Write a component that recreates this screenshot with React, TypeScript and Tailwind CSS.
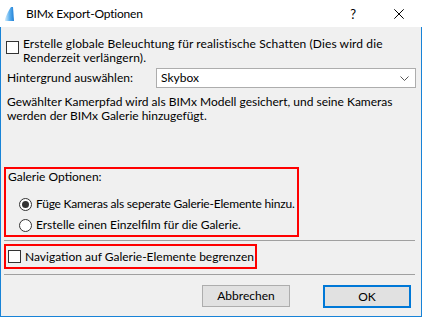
import React from "react";

const font = { fontFamily: 'Lato, "Noto Sans", sans-serif' };

function Checkbox() {
  return <div className="w-[13px] h-[13px] border border-[#333333] bg-white shrink-0" />;
}

function Radio({ checked }: { checked?: boolean }) {
  return (
    <div className="w-[13px] h-[13px] rounded-full border border-[#333333] bg-white shrink-0 flex items-center justify-center">
      {checked && <div className="w-[7px] h-[7px] rounded-full bg-[#333333]" />}
    </div>
  );
}

export default function App() {
  return (
    <div
      className="w-[422px] h-[317px] flex flex-col text-[12px] leading-[14px] text-black overflow-hidden"
      style={font}
    >
      <div className="h-[27px] bg-white flex items-center shrink-0">
        <svg className="ml-[5px]" width="9" height="14" viewBox="0 0 9 14">
          <defs>
            <linearGradient id="g" x1="0" y1="0" x2="1" y2="0">
              <stop offset="0" stopColor="#d6eefc" />
              <stop offset="0.5" stopColor="#5db0ee" />
              <stop offset="1" stopColor="#1f7fd6" />
            </linearGradient>
          </defs>
          <path d="M0 14 L0 12 Q3 4 6 0 L8 0 L9 14 Z" fill="url(#g)" />
        </svg>
        <span className="ml-[12px] text-[12px] tracking-[-0.2px] whitespace-nowrap">BIMx Export-Optionen</span>
        <span className="ml-auto text-[13px]">?</span>
        <svg className="ml-[38px] mr-[18px]" width="10" height="10" viewBox="0 0 10 10">
          <path d="M0.3 0.3 L9.7 9.7 M9.7 0.3 L0.3 9.7" stroke="#000" strokeWidth="1" />
        </svg>
      </div>
      <div className="flex-1 flex flex-col bg-[#f0f0f0] border-x border-b border-[#1883d7] px-[5px] pt-[10px]">
        <div className="flex items-start">
          <div className="mt-[4px]"><Checkbox /></div>
          <div className="ml-[4px] whitespace-nowrap tracking-[0.1px]">
            Erstelle globale Beleuchtung für realistische Schatten (Dies wird die
            <br />
            Renderzeit verlängern).
          </div>
        </div>
        <div className="flex items-center mt-[3px]">
          <span className="w-[150px] pl-[1px] whitespace-nowrap">Hintergrund auswählen:</span>
          <div className="w-[260px] h-[20px] border border-[#adadad] bg-white flex items-center pl-[4px] pr-[6px]">
            <span>Skybox</span>
            <svg className="ml-auto" width="9" height="5" viewBox="0 0 9 5">
              <path d="M0.5 0.5 L4.5 4.5 L8.5 0.5" stroke="#555" fill="none" strokeWidth="1" />
            </svg>
          </div>
        </div>
        <div className="mt-[7px] pl-[1px] whitespace-nowrap">
          Gewählter Kamerpfad wird als BIMx Modell gesichert, und seine Kameras
          <br />
          werden der BIMx Galerie hinzugefügt.
        </div>
        <div className="mt-[44px] -ml-[2px] w-[295px] h-[70px] border-2 border-[#ff0000] flex flex-col pl-[2px] pt-[1px] shrink-0">
          <div className="whitespace-nowrap">Galerie Optionen:</div>
          <div className="flex items-center gap-[4px] pl-[11px] mt-[13px]">
            <Radio checked />
            <span className="whitespace-nowrap tracking-[-0.2px]">Füge Kameras als seperate Galerie-Elemente hinzu.</span>
          </div>
          <div className="flex items-center gap-[4px] pl-[11px] mt-[7px]">
            <Radio />
            <span className="whitespace-nowrap">Erstelle einen Einzelfilm für die Galerie.</span>
          </div>
        </div>
        <div className="mt-[3px] -ml-[2px] w-[411px] h-px bg-[#a0a0a0] shrink-0" />
        <div className="mt-[3px] -ml-[2px] w-[253px] h-[25px] border-2 border-[#ff0000] flex items-center pl-[2px] gap-[4px] shrink-0">
          <Checkbox />
          <span className="whitespace-nowrap">Navigation auf Galerie-Elemente begrenzen</span>
        </div>
        <div className="mt-[5px] -ml-[2px] w-[411px] h-px bg-[#a0a0a0] shrink-0" />
        <div className="flex justify-end gap-[33px] mt-[10px] pr-[5px]">
          <button className="w-[88px] h-[22px] border border-[#adadad] bg-[#e1e1e1] text-[12px]">Abbrechen</button>
          <button className="w-[88px] h-[23px] border-2 border-[#0078d7] bg-[#e1e1e1] text-[12px]">OK</button>
        </div>
      </div>
    </div>
  );
}
